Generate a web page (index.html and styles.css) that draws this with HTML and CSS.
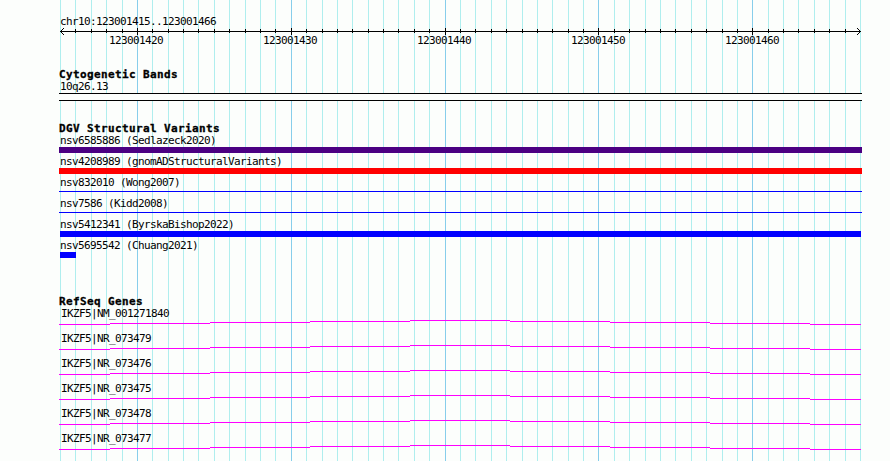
FILE: index.html
```html
<!doctype html>
<html lang="en">
  <head>
    <meta charset="UTF-8" />
    <title>chr10:123001415..123001466</title>
    <link rel="stylesheet" href="styles.css">
  </head>
  <body>
    <div class="browser">
      <!-- Grid lines, one per base -->
      <svg class="grid" width="890" height="461" shape-rendering="crispEdges">
        <path id="grid-minor" class="grid-minor" d="" />
        <path id="grid-major" class="grid-major" d="" />
      </svg>

      <!-- Ruler -->
      <header class="ruler">
        <p class="label">chr10:123001415..123001466</p>
        <svg class="axis" width="803" height="9" shape-rendering="crispEdges">
          <path d="M1 4.5H802" />
          <path id="ticks" d="" />
          <path d="M2 3.5h1M3 2.5h1M4 1.5h1M2 5.5h1M3 6.5h1M4 7.5h1" />
          <path d="M800 3.5h1M799 2.5h1M798 1.5h1M800 5.5h1M799 6.5h1M798 7.5h1" />
        </svg>
        <div class="ticks-labels">
          <span class="label">123001420</span>
          <span class="label">123001430</span>
          <span class="label">123001440</span>
          <span class="label">123001450</span>
          <span class="label">123001460</span>
        </div>
      </header>

      <!-- Cytogenetic bands -->
      <section class="track track-cyto">
        <h2 class="title">Cytogenetic Bands</h2>
        <p class="label">10q26.13</p>
        <div class="band"></div>
      </section>

      <!-- Structural variants -->
      <section class="track track-dgv">
        <h2 class="title">DGV Structural Variants</h2>
        <div class="variant"><p class="label">nsv6585886 (Sedlazeck2020)</p><div class="bar bar-complex"></div></div>
        <div class="variant"><p class="label">nsv4208989 (gnomADStructuralVariants)</p><div class="bar bar-loss"></div></div>
        <div class="variant"><p class="label">nsv832010 (Wong2007)</p><div class="bar bar-line"></div></div>
        <div class="variant"><p class="label">nsv7586 (Kidd2008)</p><div class="bar bar-line"></div></div>
        <div class="variant"><p class="label">nsv5412341 (ByrskaBishop2022)</p><div class="bar bar-gain"></div></div>
        <div class="variant"><p class="label">nsv5695542 (Chuang2021)</p><div class="bar bar-gain bar-short"></div></div>
      </section>

      <!-- Genes -->
      <section class="track track-genes">
        <h2 class="title">RefSeq Genes</h2>
        <div class="gene"><p class="label">IKZF5|NM_001271840</p></div>
        <div class="gene"><p class="label">IKZF5|NR_073479</p></div>
        <div class="gene"><p class="label">IKZF5|NR_073476</p></div>
        <div class="gene"><p class="label">IKZF5|NR_073475</p></div>
        <div class="gene"><p class="label">IKZF5|NR_073478</p></div>
        <div class="gene"><p class="label">IKZF5|NR_073477</p></div>
      </section>
    </div>

    <script>
      const bases = 52;
      const step = 800 / bases;
      let minor = '';
      let major = '';
      let ticks = '';

      for (let i = 0; i <= bases; i++) {
        const x = Math.round(i * step);
        const isMajor = i % 10 === 5;
        const line = `M${60 + x + 0.5} 0V461`;
        if (isMajor) {
          major += line;
        } else {
          minor += line;
        }
        // No tick under the arrow heads
        if (i > 0 && i < bases) {
          ticks += isMajor ? `M${x + 1.5} 1V8` : `M${x + 1.5} 2V6`;
        }
      }

      document.getElementById('grid-minor').setAttribute('d', minor);
      document.getElementById('grid-major').setAttribute('d', major);
      document.getElementById('ticks').setAttribute('d', ticks);

      // Intron line, raised one pixel at every step towards the middle
      const intron = 'M0 4.5H51M51 3.5H151M151 2.5H251M251 1.5H351M351 .5H451' +
        'M451 1.5H551M551 2.5H651M651 3.5H751M751 4.5H802';
      document.querySelectorAll('.gene').forEach((gene) => {
        gene.insertAdjacentHTML('beforeend',
          `<svg class="intron" width="803" height="5" shape-rendering="crispEdges"><path d="${intron}" /></svg>`);
      });
    </script>
  </body>
</html>
```
FILE: styles.css
```css
* {
  margin: 0;
  padding: 0;
  box-sizing: border-box;
}

body {
  background: #fcfefc;
  color: #000;
  overflow: hidden;
}

.browser {
  position: relative;
  width: 890px;
  height: 461px;
  padding: 15px 28px 0 59px;
  overflow: hidden;
}

/* Grid */
.grid {
  position: absolute;
  top: 0;
  left: 0;
  z-index: -1;
}

.grid path {
  fill: none;
  stroke-width: 1;
}

.grid-minor {
  stroke: #afeeee;
}

.grid-major {
  stroke: #87ceeb;
}

/* Text */
.label {
  height: 12px;
  padding-left: 1px;
  font: 11px/12px "DejaVu Sans Mono", monospace;
  letter-spacing: -0.622px;
  white-space: pre;
}

.title {
  height: 13px;
  font: bold 11px/13px "DejaVu Sans Mono", monospace;
  letter-spacing: 0.378px;
  -webkit-text-stroke: 0.3px #000;
  white-space: pre;
}

/* Ruler */
.ruler {
  height: 53px;
}

.ruler > .label {
  line-height: 14px;
}

.axis {
  display: block;
}

.axis path {
  fill: none;
  stroke: #000;
}

.ticks-labels {
  display: flex;
  gap: 99px;
  margin-top: -1px;
  padding-left: 49px;
}

.ticks-labels .label {
  width: 55px;
}

/* Tracks */
.track-cyto {
  height: 54px;
}

.band {
  height: 8px;
  border-top: 1px solid #000;
  border-bottom: 1px solid #000;
  background: #fcfefc;
}

.track-dgv {
  height: 173px;
}

.variant {
  height: 21px;
}

.bar {
  height: 6px;
}

.bar-complex {
  background: #4b0082;
}

.bar-loss {
  background: #f00;
}

.bar-line {
  height: 1px;
  margin-top: 2px;
  background: #00f;
}

.bar-gain {
  width: 801px;
  margin-left: 1px;
  background: #00f;
}

.bar-short {
  width: 16px;
}

.gene {
  height: 25px;
}

.gene .label {
  padding-left: 2px;
}

.intron {
  display: block;
}

.intron path {
  fill: none;
  stroke: #f0f;
}
```
